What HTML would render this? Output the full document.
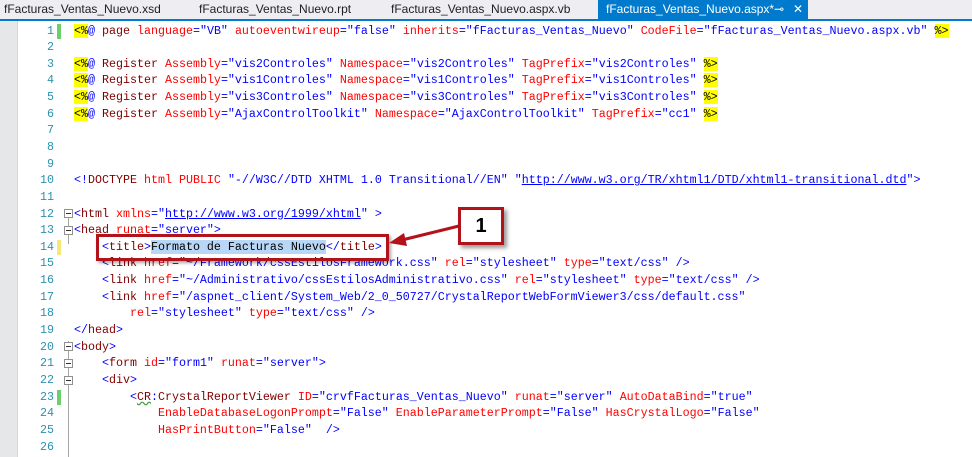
<!DOCTYPE html>
<html><head><meta charset="utf-8"><style>
*{margin:0;padding:0;box-sizing:border-box}
body{width:972px;height:457px;overflow:hidden;background:#fff;position:relative;font-family:"Liberation Sans",sans-serif}
.tabs{position:absolute;left:0;top:0;width:972px;height:19px;background:#eeeef2}
.tab{position:absolute;top:0;height:19px;font-size:12px;line-height:19px;color:#1e1e1e;white-space:nowrap}
.tab.act{background:#007acc;color:#fff;padding-left:8px;font-size:12px;overflow:hidden}
.bar{position:absolute;left:0;top:19px;width:972px;height:2px;background:#007acc}
.gstrip{position:absolute;left:0;top:21px;width:18px;height:436px;background:#e6e7e8;border-right:1px solid #d6d6d6}
.code{position:absolute;left:0;top:22.5px;font-family:"Liberation Mono",monospace;font-size:11.67px}
.ln{position:relative;height:16.65px;line-height:16.65px;white-space:pre}
.num{position:absolute;left:20px;width:34px;text-align:right;color:#2b91af}
.t{position:absolute;left:74px;color:#000}
.mk{position:absolute;left:57px;top:1px;width:4px;height:15px}
.b{color:#0000ff}.m{color:#800000}.r{color:#ff0000}.y{background:#ffff00;color:#000}.u{text-decoration:underline;color:#0000ff}
.sel{background:#b8d6f5}
.vline{position:absolute;left:68px;width:1px;background:#a5a5a5}
.box{position:absolute;width:9px;height:9px;border:1px solid #909090;background:#fff;left:64px}
.box:after{content:"";position:absolute;left:1px;top:3px;width:5px;height:1px;background:#333}
</style></head><body>
<div class="tabs">
<div class="tab" style="left:4px">fFacturas_Ventas_Nuevo.xsd</div>
<div class="tab" style="left:199px">fFacturas_Ventas_Nuevo.rpt</div>
<div class="tab" style="left:391px">fFacturas_Ventas_Nuevo.aspx.vb</div>
<div class="tab act" style="left:598px;width:210px">fFacturas_Ventas_Nuevo.aspx*<span style="position:absolute;left:176px;top:0">⊸</span><span style="position:absolute;left:195px;top:0">✕</span></div>
</div>
<div class="bar"></div>
<div class="gstrip"></div>
<div class="vline" style="top:214px;height:30px"></div>
<div class="vline" style="top:341px;height:116px"></div>
<div class="box" style="top:209px"></div>
<div class="box" style="top:226px"></div>
<div class="box" style="top:342px"></div>
<div class="box" style="top:359px"></div>
<div class="box" style="top:376px"></div>
<div class="code">
<div class="ln"><span class="mk" style="background:#6ccf6c"></span><span class="num">1</span><span class="t"><span class="y">&lt;%</span><span class="b">@</span> <span class="m">page</span> <span class="r">language</span><span class="b">="VB"</span> <span class="r">autoeventwireup</span><span class="b">="false"</span> <span class="r">inherits</span><span class="b">="fFacturas_Ventas_Nuevo"</span> <span class="r">CodeFile</span><span class="b">="fFacturas_Ventas_Nuevo.aspx.vb"</span> <span class="y">%&gt;</span></span></div>
<div class="ln"><span class="num">2</span></div>
<div class="ln"><span class="num">3</span><span class="t"><span class="y">&lt;%</span><span class="b">@</span> <span class="m">Register</span> <span class="r">Assembly</span><span class="b">="vis2Controles"</span> <span class="r">Namespace</span><span class="b">="vis2Controles"</span> <span class="r">TagPrefix</span><span class="b">="vis2Controles"</span> <span class="y">%&gt;</span></span></div>
<div class="ln"><span class="num">4</span><span class="t"><span class="y">&lt;%</span><span class="b">@</span> <span class="m">Register</span> <span class="r">Assembly</span><span class="b">="vis1Controles"</span> <span class="r">Namespace</span><span class="b">="vis1Controles"</span> <span class="r">TagPrefix</span><span class="b">="vis1Controles"</span> <span class="y">%&gt;</span></span></div>
<div class="ln"><span class="num">5</span><span class="t"><span class="y">&lt;%</span><span class="b">@</span> <span class="m">Register</span> <span class="r">Assembly</span><span class="b">="vis3Controles"</span> <span class="r">Namespace</span><span class="b">="vis3Controles"</span> <span class="r">TagPrefix</span><span class="b">="vis3Controles"</span> <span class="y">%&gt;</span></span></div>
<div class="ln"><span class="num">6</span><span class="t"><span class="y">&lt;%</span><span class="b">@</span> <span class="m">Register</span> <span class="r">Assembly</span><span class="b">="AjaxControlToolkit"</span> <span class="r">Namespace</span><span class="b">="AjaxControlToolkit"</span> <span class="r">TagPrefix</span><span class="b">="cc1"</span> <span class="y">%&gt;</span></span></div>
<div class="ln"><span class="num">7</span></div>
<div class="ln"><span class="num">8</span></div>
<div class="ln"><span class="num">9</span></div>
<div class="ln"><span class="num">10</span><span class="t"><span class="b">&lt;!</span><span class="m">DOCTYPE</span> <span class="r">html</span> <span class="r">PUBLIC</span> <span class="b">"-//W3C//DTD XHTML 1.0 Transitional//EN"</span> <span class="b">"</span><span class="u">http://www.w3.org/TR/xhtml1/DTD/xhtml1-transitional.dtd</span><span class="b">"&gt;</span></span></div>
<div class="ln"><span class="num">11</span></div>
<div class="ln"><span class="num">12</span><span class="t"><span class="b">&lt;</span><span class="m">html</span> <span class="r">xmlns</span><span class="b">="</span><span class="u">http://www.w3.org/1999/xhtml</span><span class="b">" &gt;</span></span></div>
<div class="ln"><span class="num">13</span><span class="t"><span class="b">&lt;</span><span class="m">head</span> <span class="r">runat</span><span class="b">="server"&gt;</span></span></div>
<div class="ln"><span class="mk" style="background:#f5e77a"></span><span class="num">14</span><span class="t">    <span class="b">&lt;</span><span class="m">title</span><span class="b">&gt;</span><span class="sel">Formato de Facturas Nuevo</span><span class="b">&lt;/</span><span class="m">title</span><span class="b">&gt;</span></span></div>
<div class="ln"><span class="num">15</span><span class="t">    <span class="b">&lt;</span><span class="m">link</span> <span class="r">href</span><span class="b">="~/Framework/cssEstilosFramework.css"</span> <span class="r">rel</span><span class="b">="stylesheet"</span> <span class="r">type</span><span class="b">="text/css"</span> <span class="b">/&gt;</span></span></div>
<div class="ln"><span class="num">16</span><span class="t">    <span class="b">&lt;</span><span class="m">link</span> <span class="r">href</span><span class="b">="~/Administrativo/cssEstilosAdministrativo.css"</span> <span class="r">rel</span><span class="b">="stylesheet"</span> <span class="r">type</span><span class="b">="text/css"</span> <span class="b">/&gt;</span></span></div>
<div class="ln"><span class="num">17</span><span class="t">    <span class="b">&lt;</span><span class="m">link</span> <span class="r">href</span><span class="b">="/aspnet_client/System_Web/2_0_50727/CrystalReportWebFormViewer3/css/default.css"</span></span></div>
<div class="ln"><span class="num">18</span><span class="t">        <span class="r">rel</span><span class="b">="stylesheet"</span> <span class="r">type</span><span class="b">="text/css"</span> <span class="b">/&gt;</span></span></div>
<div class="ln"><span class="num">19</span><span class="t"><span class="b">&lt;/</span><span class="m">head</span><span class="b">&gt;</span></span></div>
<div class="ln"><span class="num">20</span><span class="t"><span class="b">&lt;</span><span class="m">body</span><span class="b">&gt;</span></span></div>
<div class="ln"><span class="num">21</span><span class="t">    <span class="b">&lt;</span><span class="m">form</span> <span class="r">id</span><span class="b">="form1"</span> <span class="r">runat</span><span class="b">="server"&gt;</span></span></div>
<div class="ln"><span class="num">22</span><span class="t">    <span class="b">&lt;</span><span class="m">div</span><span class="b">&gt;</span></span></div>
<div class="ln"><span class="mk" style="background:#6ccf6c"></span><span class="num">23</span><span class="t">        <span class="b">&lt;</span><span class="m" style="text-decoration:underline wavy #3a9a3a">CR</span><span class="b">:</span><span class="m">CrystalReportViewer</span> <span class="r">ID</span><span class="b">="crvfFacturas_Ventas_Nuevo"</span> <span class="r">runat</span><span class="b">="server"</span> <span class="r">AutoDataBind</span><span class="b">="true"</span></span></div>
<div class="ln"><span class="num">24</span><span class="t">            <span class="r">EnableDatabaseLogonPrompt</span><span class="b">="False"</span> <span class="r">EnableParameterPrompt</span><span class="b">="False"</span> <span class="r">HasCrystalLogo</span><span class="b">="False"</span></span></div>
<div class="ln"><span class="num">25</span><span class="t">            <span class="r">HasPrintButton</span><span class="b">="False"</span>  <span class="b">/&gt;</span></span></div>
<div class="ln"><span class="num">26</span></div>
</div>
<div style="position:absolute;left:96px;top:234px;width:293px;height:27px;border:3px solid #b3121b;box-shadow:2px 2px 3px rgba(0,0,0,.35)"></div>
<div style="position:absolute;left:458px;top:207px;width:46px;height:38px;border:3px solid #b3121b;background:#fff;box-shadow:3px 3px 4px rgba(0,0,0,.4);font:bold 20px 'Liberation Sans',sans-serif;text-align:center;line-height:32px;color:#000">1</div>
<svg style="position:absolute;left:0;top:0" width="972" height="457"><line x1="459" y1="226" x2="402" y2="240" stroke="#b3121b" stroke-width="3"/><polygon points="389,243 404,233 407,246" fill="#b3121b"/></svg>
</body></html>
